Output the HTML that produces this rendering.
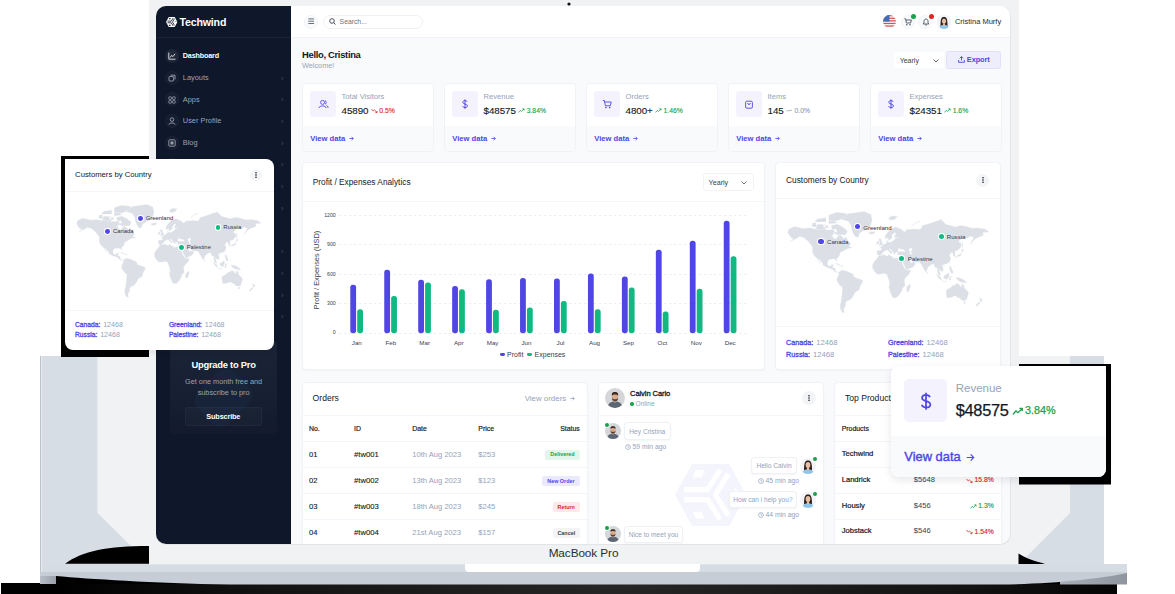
<!DOCTYPE html><html><head><meta charset="utf-8"><style>
*{margin:0;padding:0;box-sizing:border-box}
html,body{width:1175px;height:594px;overflow:hidden;background:#fff}
body{font-family:"Liberation Sans",sans-serif}
#root{position:relative;width:1175px;height:594px;overflow:hidden;background:#fff}
.a{position:absolute}
.t{position:absolute;white-space:nowrap;line-height:1}
svg{position:absolute;overflow:visible}
</style></head><body><div id="root"><svg class="a" style="left:0;top:0" width="1175" height="594" viewBox="0 0 1175 594">
<defs>
<radialGradient id="blk" cx="0.55" cy="0.75" r="0.5" gradientTransform="translate(0.55,0.75) scale(1,20) translate(-0.55,-0.75)"><stop offset="0" stop-color="#262626"/><stop offset="0.6" stop-color="#141414"/><stop offset="1" stop-color="#000"/></radialGradient>
<linearGradient id="cornL" x1="0" y1="0" x2="1" y2="0"><stop offset="0" stop-color="#b9bfc8"/><stop offset="1" stop-color="#9aa0a9"/></linearGradient>
<linearGradient id="cornR" x1="0" y1="0" x2="1" y2="0"><stop offset="0" stop-color="#a9afb8"/><stop offset="1" stop-color="#8f959e"/></linearGradient>
</defs>
<rect x="1" y="583" width="1116" height="11" fill="url(#blk)"/>
<rect x="55" y="574" width="1030" height="10" fill="#000"/>
<rect x="40" y="572" width="16" height="12" fill="url(#cornL)"/>
<rect x="1060" y="572" width="67" height="12.5" fill="url(#cornR)"/>
<path d="M40,572 H1127 V573 C1100,579 1050,584 1000,584.6 H230 C150,583 90,579 56,576 H40 Z" fill="#c6cdd6"/>
<rect x="40" y="564" width="1087" height="8" fill="#d6dce4"/><rect x="149" y="563.3" width="870" height="1" fill="#f8f9fa"/>
<path d="M465,564 H700 V568 Q700,572 696,572 H469 Q465,572 465,568 Z" fill="#ffffff"/>
<rect x="40" y="356" width="109" height="208" fill="#d7dde5"/>
<rect x="40" y="356" width="1" height="216" fill="#bcc3cc"/><rect x="41" y="356" width="1.2" height="216" fill="#e4e9ee"/>
<rect x="1019" y="356" width="85" height="208" fill="#d7dde5"/>
<rect x="149" y="0" width="870" height="564" fill="#f1f2f4"/>
<path d="M97.5,356 H149 V546 H131 L97.5,513 Z" fill="#f1f2f4"/><rect x="97" y="356" width="1" height="157" fill="#e6eaee"/>
<path d="M1019,356 H1070 V513 L1019,564 Z" fill="#f1f2f4"/>
<path d="M65,563.8 C82,551 108,546 149,546 V563.8 Z" fill="#000"/>
<path d="M1018.5,553.5 L1018.5,564 H1045 C1040,562 1030,561 1018.5,553.5 Z" fill="#000"/>
<circle cx="569" cy="4" r="1.6" fill="#111"/>
</svg>
<div class="t" style="left:583.5px;width:0;display:flex;justify-content:center;top:547.8px;font-size:11.80px;color:#2d2d2d;font-weight:400;letter-spacing:-0.1px">MacBook Pro</div>
<div class="a" style="left:155.5px;top:5.5px;width:855.5px;height:539px;border-radius:10.5px;background:#e3e5e9"></div>
<div class="a" style="left:156px;top:6px;width:854px;height:538px;border-radius:10px;overflow:hidden;background:#f8fafc">
<div class="a" style="left:-156px;top:-6px;width:1175px;height:594px">
<div class="a" style="left:156.0px;top:6.0px;width:135.0px;height:538.0px;background:#0f172a"></div>
<div class="a" style="left:156.0px;top:37.0px;width:135.0px;height:1.0px;background:#1a2234"></div>
<svg style="left:165.6px;top:16.9px" width="11.4" height="10.1" viewBox="72 67 525 460" preserveAspectRatio="none"><polygon points="72,295 199,67 474,67 597,295 474,527 199,527" fill="#ffffff"/><g fill="none" stroke="#0f172a" stroke-width="38" stroke-linejoin="miter"><polyline points="140,257 312,257 405,112"/><polyline points="466,140 371,295 466,450"/><polyline points="140,331 312,331 405,478"/></g><g fill="#0f172a"><polygon points="225,111 291,111 269,168 203,168"/><polygon points="203,422 269,422 291,474 225,474"/><polygon points="513,242 562,295 513,298"/></g></svg>
<div class="t" style="left:179.4px;top:17.1px;font-size:10.60px;color:#fff;font-weight:700;letter-spacing:-0.15px">Techwind</div>
<div class="a" style="left:165px;top:48.8px;width:14px;height:14px;border-radius:7px;background:#202839;box-shadow:inset 0 0 0 1px #1b2336"></div>
<div class="t" style="left:182.8px;top:52.1px;font-size:7.20px;color:#ffffff;font-weight:700;letter-spacing:-0.15px">Dashboard</div>
<div class="a" style="left:165px;top:70.7px;width:14px;height:14px;border-radius:7px;background:#151d30;box-shadow:inset 0 0 0 1px #1b2336"></div>
<div class="t" style="left:182.8px;top:73.9px;font-size:7.40px;color:#9ca3af;font-weight:400;">Layouts</div>
<div class="t" style="left:281.0px;top:74.6px;font-size:7.00px;color:#4b5563;font-weight:400;">&#8250;</div>
<div class="a" style="left:165px;top:92.4px;width:14px;height:14px;border-radius:7px;background:#151d30;box-shadow:inset 0 0 0 1px #1b2336"></div>
<div class="t" style="left:182.8px;top:95.6px;font-size:7.40px;color:#9ca3af;font-weight:400;">Apps</div>
<div class="t" style="left:281.0px;top:96.3px;font-size:7.00px;color:#4b5563;font-weight:400;">&#8250;</div>
<div class="a" style="left:165px;top:114.0px;width:14px;height:14px;border-radius:7px;background:#151d30;box-shadow:inset 0 0 0 1px #1b2336"></div>
<div class="t" style="left:182.8px;top:117.2px;font-size:7.40px;color:#9ca3af;font-weight:400;">User Profile</div>
<div class="t" style="left:281.0px;top:117.9px;font-size:7.00px;color:#4b5563;font-weight:400;">&#8250;</div>
<div class="a" style="left:165px;top:135.8px;width:14px;height:14px;border-radius:7px;background:#151d30;box-shadow:inset 0 0 0 1px #1b2336"></div>
<div class="t" style="left:182.8px;top:139.0px;font-size:7.40px;color:#9ca3af;font-weight:400;">Blog</div>
<div class="t" style="left:281.0px;top:139.7px;font-size:7.00px;color:#4b5563;font-weight:400;">&#8250;</div>
<div class="a" style="left:165px;top:157.5px;width:14px;height:14px;border-radius:7px;background:#151d30;box-shadow:inset 0 0 0 1px #1b2336"></div>
<div class="t" style="left:182.8px;top:160.7px;font-size:7.40px;color:#9ca3af;font-weight:400;">Email</div>
<div class="t" style="left:281.0px;top:161.4px;font-size:7.00px;color:#4b5563;font-weight:400;">&#8250;</div>
<div class="a" style="left:165px;top:179.5px;width:14px;height:14px;border-radius:7px;background:#151d30;box-shadow:inset 0 0 0 1px #1b2336"></div>
<div class="t" style="left:182.8px;top:182.7px;font-size:7.40px;color:#9ca3af;font-weight:400;">Chat</div>
<div class="t" style="left:281.0px;top:183.4px;font-size:7.00px;color:#4b5563;font-weight:400;">&#8250;</div>
<div class="a" style="left:165px;top:201.4px;width:14px;height:14px;border-radius:7px;background:#151d30;box-shadow:inset 0 0 0 1px #1b2336"></div>
<div class="t" style="left:182.8px;top:204.6px;font-size:7.40px;color:#9ca3af;font-weight:400;">Calendar</div>
<div class="t" style="left:281.0px;top:205.3px;font-size:7.00px;color:#4b5563;font-weight:400;">&#8250;</div>
<div class="a" style="left:165px;top:223.0px;width:14px;height:14px;border-radius:7px;background:#151d30;box-shadow:inset 0 0 0 1px #1b2336"></div>
<div class="t" style="left:182.8px;top:226.2px;font-size:7.40px;color:#9ca3af;font-weight:400;">Components</div>
<div class="a" style="left:165px;top:244.0px;width:14px;height:14px;border-radius:7px;background:#151d30;box-shadow:inset 0 0 0 1px #1b2336"></div>
<div class="t" style="left:182.8px;top:247.2px;font-size:7.40px;color:#9ca3af;font-weight:400;">Widgets</div>
<div class="t" style="left:281.0px;top:247.9px;font-size:7.00px;color:#4b5563;font-weight:400;">&#8250;</div>
<div class="a" style="left:165px;top:266.0px;width:14px;height:14px;border-radius:7px;background:#151d30;box-shadow:inset 0 0 0 1px #1b2336"></div>
<div class="t" style="left:182.8px;top:269.2px;font-size:7.40px;color:#9ca3af;font-weight:400;">Charts</div>
<div class="t" style="left:281.0px;top:269.9px;font-size:7.00px;color:#4b5563;font-weight:400;">&#8250;</div>
<div class="a" style="left:165px;top:288.0px;width:14px;height:14px;border-radius:7px;background:#151d30;box-shadow:inset 0 0 0 1px #1b2336"></div>
<div class="t" style="left:182.8px;top:291.2px;font-size:7.40px;color:#9ca3af;font-weight:400;">Forms</div>
<div class="t" style="left:281.0px;top:291.9px;font-size:7.00px;color:#4b5563;font-weight:400;">&#8250;</div>
<div class="a" style="left:165px;top:309.5px;width:14px;height:14px;border-radius:7px;background:#151d30;box-shadow:inset 0 0 0 1px #1b2336"></div>
<div class="t" style="left:182.8px;top:312.7px;font-size:7.40px;color:#9ca3af;font-weight:400;">Tables</div>
<div class="t" style="left:281.0px;top:313.4px;font-size:7.00px;color:#4b5563;font-weight:400;">&#8250;</div>
<svg style="left:168px;top:52px" width="8" height="8" viewBox="0 0 8 8"><path d="M0.8 0.5 V7.2 H7.5 M2 5.5 L3.6 3.4 L5 4.6 L7 1.8" fill="none" stroke="#e5e7eb" stroke-width="0.9"/></svg>
<svg style="left:168px;top:74px" width="8" height="8" viewBox="0 0 8 8"><rect x="1" y="2.6" width="4.6" height="4.4" rx="0.6" fill="none" stroke="#9ca3af" stroke-width="0.9"/><path d="M2.5 1.2 H7 V5.5" fill="none" stroke="#9ca3af" stroke-width="0.9"/></svg>
<svg style="left:168px;top:95.5px" width="8" height="8" viewBox="0 0 8 8"><rect x="0.8" y="0.8" width="2.6" height="2.6" rx="0.5" fill="none" stroke="#9ca3af" stroke-width="0.8"/><rect x="4.6" y="0.8" width="2.6" height="2.6" rx="0.5" fill="none" stroke="#9ca3af" stroke-width="0.8"/><rect x="0.8" y="4.6" width="2.6" height="2.6" rx="0.5" fill="none" stroke="#9ca3af" stroke-width="0.8"/><rect x="4.6" y="4.6" width="2.6" height="2.6" rx="0.5" fill="none" stroke="#9ca3af" stroke-width="0.8"/></svg>
<svg style="left:168px;top:117px" width="8" height="8" viewBox="0 0 8 8"><circle cx="4" cy="2.6" r="1.8" fill="none" stroke="#9ca3af" stroke-width="0.9"/><path d="M1 7.6 C1 5.4 7 5.4 7 7.6" fill="none" stroke="#9ca3af" stroke-width="0.9"/></svg>
<svg style="left:168px;top:139px" width="8" height="8" viewBox="0 0 8 8"><rect x="0.8" y="0.8" width="6.4" height="6.4" rx="1" fill="none" stroke="#9ca3af" stroke-width="0.9"/><rect x="2.5" y="2.5" width="3" height="3" fill="#9ca3af"/></svg>
<div class="a" style="left:170px;top:341px;width:106.5px;height:93px;border-radius:4px;background:linear-gradient(180deg,#1a2436,#151f31 70%,#121a2c)"></div>
<div class="a" style="left:201px;top:375px;width:45px;height:45px;border-radius:12px;background:rgba(35,60,105,0.15);transform:rotate(45deg) scaleY(1.15)"></div>
<div class="t" style="left:223.6px;width:0;display:flex;justify-content:center;top:360.3px;font-size:9.40px;color:#fff;font-weight:700;letter-spacing:-0.25px">Upgrade to Pro</div>
<div class="t" style="left:223.6px;width:0;display:flex;justify-content:center;top:378.1px;font-size:7.30px;color:#9ca3af;font-weight:400;">Get one month free and</div>
<div class="t" style="left:223.6px;width:0;display:flex;justify-content:center;top:388.8px;font-size:7.30px;color:#9ca3af;font-weight:400;">subscribe to pro</div>
<div class="a" style="left:184.7px;top:407px;width:77.2px;height:19px;border-radius:3px;background:rgba(255,255,255,0.025);border:1px solid rgba(255,255,255,0.035)"></div>
<div class="t" style="left:223.3px;width:0;display:flex;justify-content:center;top:412.6px;font-size:7.30px;color:#fff;font-weight:700;letter-spacing:-0.15px">Subscribe</div>
<div class="a" style="left:291.0px;top:6.0px;width:719.0px;height:32.0px;background:#fff;border-bottom:1px solid #f0f2f5"></div>
<div class="a" style="left:304px;top:14.6px;width:14px;height:14px;border-radius:7px;background:#f8fafc;border:1px solid #f1f3f6"></div>
<svg style="left:308px;top:18.4px" width="6.4" height="6.4" viewBox="0 0 6.4 6.4"><path d="M0.3 0.9 H6.1 M0.3 3.2 H6.1 M0.3 5.5 H6.1" stroke="#374151" stroke-width="0.75"/></svg>
<div class="a" style="left:323px;top:14.5px;width:100px;height:14px;border-radius:7px;background:#fff;border:1px solid #eef1f5"></div>
<svg style="left:328.5px;top:18px" width="7" height="7" viewBox="0 0 7 7"><circle cx="3" cy="3" r="2.3" fill="none" stroke="#374151" stroke-width="0.9"/><path d="M4.7 4.7 L6.5 6.5" stroke="#374151" stroke-width="0.9"/></svg>
<div class="t" style="left:339.6px;top:18.8px;font-size:6.80px;color:#6b7280;font-weight:400;">Search...</div>
<svg style="left:883px;top:15.2px" width="13" height="13" viewBox="0 0 13 13"><defs><clipPath id="fc"><circle cx="6.5" cy="6.5" r="6.5"/></clipPath></defs><g clip-path="url(#fc)"><rect width="13" height="13" fill="#fff"/><rect y="0" width="13" height="1.3" fill="#d9534f"/><rect y="2.6" width="13" height="1.3" fill="#d9534f"/><rect y="5.2" width="13" height="1.3" fill="#d9534f"/><rect y="7.8" width="13" height="1.3" fill="#d9534f"/><rect y="10.4" width="13" height="1.3" fill="#d9534f"/><rect width="6.5" height="6.5" fill="#3f6fb5"/></g></svg>
<div class="a" style="left:901.0px;top:14.7px;width:14px;height:14px;border-radius:7px;background:#f8fafc;border:1px solid #f1f3f6"></div>
<div class="a" style="left:918.4px;top:14.7px;width:14px;height:14px;border-radius:7px;background:#f8fafc;border:1px solid #f1f3f6"></div>
<svg style="left:904.2px;top:18px" width="8" height="8" viewBox="0 0 8 8"><path d="M0.3 0.8 H1.6 L2.4 5 H6.6 L7.4 2 H2" fill="none" stroke="#374151" stroke-width="0.8" stroke-linejoin="round"/><circle cx="2.8" cy="6.7" r="0.7" fill="#374151"/><circle cx="6" cy="6.7" r="0.7" fill="#374151"/></svg>
<div class="a" style="left:910.6px;top:13.8px;width:5px;height:5px;border-radius:3px;background:#16a34a"></div>
<svg style="left:921.6px;top:17.8px" width="8" height="8" viewBox="0 0 8 8"><path d="M1.2 6 H6.8 L6 5 V3.2 C6 1.8 5.1 1 4 1 C2.9 1 2 1.8 2 3.2 V5 Z M3.2 7 H4.8" fill="none" stroke="#374151" stroke-width="0.8" stroke-linejoin="round"/></svg>
<div class="a" style="left:928.6px;top:13.8px;width:5px;height:5px;border-radius:3px;background:#dc2626"></div>
<div class="a" style="left:937px;top:14.7px;width:14px;height:14px;border-radius:7px;background:#f1f3f6"></div>
<svg style="left:937.0px;top:14.7px" width="14.0" height="14.0" viewBox="0 0 20 20"><defs><clipPath id="cw9384"><circle cx="10" cy="10" r="10"/></clipPath></defs><g clip-path="url(#cw9384)"><rect width="20" height="20" fill="#f1f3f6"/><path d="M5 17 C5 6 6 3 10 3 C14 3 15 6 15 17 Z" fill="#2b1d17"/><ellipse cx="10" cy="8.8" rx="3" ry="3.8" fill="#e8bfa4"/><path d="M3 21 C3 15 6.5 14 10 14 C13.5 14 17 15 17 21 Z" fill="#8ec5ea"/><path d="M8.6 12 H11.4 V15 H8.6 Z" fill="#e8bfa4"/></g></svg>
<div class="t" style="left:954.9px;top:17.9px;font-size:7.50px;color:#1f2937;font-weight:400;">Cristina Murfy</div>
<div class="t" style="left:302.0px;top:50.3px;font-size:9.40px;color:#111827;font-weight:700;letter-spacing:-0.3px">Hello, Cristina</div>
<div class="t" style="left:302.0px;top:62.4px;font-size:7.30px;color:#94a3b8;font-weight:400;">Welcome!</div>
<div class="a" style="left:894.2px;top:51.6px;width:49.7px;height:16.6px;border-radius:3px;background:#fff"></div>
<div class="t" style="left:899.7px;top:56.8px;font-size:7.00px;color:#374151;font-weight:400;">Yearly</div>
<svg style="left:932.5px;top:58.5px" width="6" height="4" viewBox="0 0 6 4"><path d="M0.5 0.5 L3 3 L5.5 0.5" fill="none" stroke="#374151" stroke-width="0.8"/></svg>
<div class="a" style="left:946.2px;top:51px;width:54.9px;height:18px;border-radius:3px;background:#eeedfb;border:1px solid #e3e1f8"></div>
<svg style="left:957.5px;top:56.2px" width="7" height="7" viewBox="0 0 7 7"><path d="M3.5 4.6 V0.7 M1.8 2.3 L3.5 0.6 L5.2 2.3 M0.6 4 V6.3 H6.4 V4" fill="none" stroke="#4f46e5" stroke-width="0.9"/></svg>
<div class="t" style="left:966.8px;top:56.4px;font-size:7.40px;color:#4f46e5;font-weight:700;letter-spacing:-0.1px">Export</div>
<div class="a" style="left:302px;top:82.7px;width:132px;height:69px;border-radius:4px;background:#fff;border:1px solid #f0f2f6;overflow:hidden"><div class="a" style="left:0;top:42.3px;width:132px;height:27px;background:#f8fafc"></div></div>
<div class="a" style="left:310.3px;top:91px;width:25.5px;height:25.5px;border-radius:3px;background:#f3f2fd"></div>
<svg style="left:318.3px;top:98.8px" width="10.0" height="10.0" viewBox="0 0 10 10"><circle cx="4.6" cy="3.4" r="2" fill="none" stroke="#4f46e5" stroke-width="0.9"/><path d="M1 9 C1 6.3 8.2 6.3 8.2 9" fill="none" stroke="#4f46e5" stroke-width="0.9"/><path d="M7 1.6 A1.9 1.9 0 0 1 7 5.2 M8.6 6.3 C9.6 6.8 10 7.7 10 9" fill="none" stroke="#4f46e5" stroke-width="0.9"/></svg>
<div class="t" style="left:341.5px;top:92.8px;font-size:7.60px;color:#94a3b8;font-weight:400;">Total Visitors</div>
<div class="t" style="left:341.5px;top:105.5px;display:flex;align-items:center;font-size:9.8px;color:#111827;letter-spacing:-0.05px;-webkit-text-stroke:0.12px #111827">45890<svg style="position:static;margin:0 2px 0 2.3px" width="6.5" height="5.4" viewBox="0 0 6.5 5.4"><path d="M0.5 1 L2.3 3 L3.5 2 L6 4.4 M4.4 4.6 H6.1 V3" fill="none" stroke="#dc2626" stroke-width="0.8"/></svg><span style="font-size:6.8px;color:#dc2626;letter-spacing:0;position:relative;top:0.8px;-webkit-text-stroke:0.12px #dc2626">0.5%</span></div>
<div class="t" style="left:310.3px;top:135.1px;font-size:7.60px;color:#4f46e5;font-weight:700;">View data</div>
<svg style="left:348.5px;top:135.8px" width="5" height="5" viewBox="0 0 5 5"><path d="M0.4 2.5 H4.3 M2.6 0.8 L4.3 2.5 L2.6 4.2" fill="none" stroke="#4f46e5" stroke-width="0.8"/></svg>
<div class="a" style="left:444px;top:82.7px;width:132px;height:69px;border-radius:4px;background:#fff;border:1px solid #f0f2f6;overflow:hidden"><div class="a" style="left:0;top:42.3px;width:132px;height:27px;background:#f8fafc"></div></div>
<div class="a" style="left:452.3px;top:91px;width:25.5px;height:25.5px;border-radius:3px;background:#f3f2fd"></div>
<svg style="left:460.3px;top:98.8px" width="10.0" height="10.0" viewBox="0 0 10 10"><path d="M7.2 2.8 C6.8 1.9 6 1.6 5 1.6 C3.6 1.6 2.8 2.3 2.8 3.3 C2.8 5.6 7.4 4.5 7.4 6.9 C7.4 7.9 6.4 8.6 5 8.6 C3.8 8.6 3 8.1 2.6 7.2 M5 0.4 V9.8" fill="none" stroke="#4f46e5" stroke-width="0.95"/></svg>
<div class="t" style="left:483.5px;top:92.8px;font-size:7.60px;color:#94a3b8;font-weight:400;">Revenue</div>
<div class="t" style="left:483.5px;top:105.5px;display:flex;align-items:center;font-size:9.8px;color:#111827;letter-spacing:-0.05px;-webkit-text-stroke:0.12px #111827">$48575<svg style="position:static;margin:0 2px 0 2.3px" width="6.5" height="5.4" viewBox="0 0 6.5 5.4"><path d="M0.5 4.4 L2.3 2.4 L3.5 3.4 L6 1 M4.4 0.8 H6.1 V2.4" fill="none" stroke="#16a34a" stroke-width="0.8"/></svg><span style="font-size:6.8px;color:#16a34a;letter-spacing:0;position:relative;top:0.8px;-webkit-text-stroke:0.12px #16a34a">3.84%</span></div>
<div class="t" style="left:452.3px;top:135.1px;font-size:7.60px;color:#4f46e5;font-weight:700;">View data</div>
<svg style="left:490.5px;top:135.8px" width="5" height="5" viewBox="0 0 5 5"><path d="M0.4 2.5 H4.3 M2.6 0.8 L4.3 2.5 L2.6 4.2" fill="none" stroke="#4f46e5" stroke-width="0.8"/></svg>
<div class="a" style="left:586px;top:82.7px;width:132px;height:69px;border-radius:4px;background:#fff;border:1px solid #f0f2f6;overflow:hidden"><div class="a" style="left:0;top:42.3px;width:132px;height:27px;background:#f8fafc"></div></div>
<div class="a" style="left:594.3px;top:91px;width:25.5px;height:25.5px;border-radius:3px;background:#f3f2fd"></div>
<svg style="left:602.3px;top:98.8px" width="10.0" height="10.0" viewBox="0 0 10 10"><path d="M0.8 1.5 H2.3 L3.4 6.8 H8.3 L9.2 3 H2.8" fill="none" stroke="#4f46e5" stroke-width="0.9" stroke-linejoin="round"/><circle cx="3.9" cy="8.6" r="0.8" fill="#4f46e5"/><circle cx="7.7" cy="8.6" r="0.8" fill="#4f46e5"/></svg>
<div class="t" style="left:625.5px;top:92.8px;font-size:7.60px;color:#94a3b8;font-weight:400;">Orders</div>
<div class="t" style="left:625.5px;top:105.5px;display:flex;align-items:center;font-size:9.8px;color:#111827;letter-spacing:-0.05px;-webkit-text-stroke:0.12px #111827">4800+<svg style="position:static;margin:0 2px 0 2.3px" width="6.5" height="5.4" viewBox="0 0 6.5 5.4"><path d="M0.5 4.4 L2.3 2.4 L3.5 3.4 L6 1 M4.4 0.8 H6.1 V2.4" fill="none" stroke="#16a34a" stroke-width="0.8"/></svg><span style="font-size:6.8px;color:#16a34a;letter-spacing:0;position:relative;top:0.8px;-webkit-text-stroke:0.12px #16a34a">1.46%</span></div>
<div class="t" style="left:594.3px;top:135.1px;font-size:7.60px;color:#4f46e5;font-weight:700;">View data</div>
<svg style="left:632.5px;top:135.8px" width="5" height="5" viewBox="0 0 5 5"><path d="M0.4 2.5 H4.3 M2.6 0.8 L4.3 2.5 L2.6 4.2" fill="none" stroke="#4f46e5" stroke-width="0.8"/></svg>
<div class="a" style="left:728px;top:82.7px;width:132px;height:69px;border-radius:4px;background:#fff;border:1px solid #f0f2f6;overflow:hidden"><div class="a" style="left:0;top:42.3px;width:132px;height:27px;background:#f8fafc"></div></div>
<div class="a" style="left:736.3px;top:91px;width:25.5px;height:25.5px;border-radius:3px;background:#f3f2fd"></div>
<svg style="left:744.3px;top:98.8px" width="10.0" height="10.0" viewBox="0 0 10 10"><rect x="1.6" y="2.2" width="6.8" height="7" rx="1.2" fill="none" stroke="#4f46e5" stroke-width="0.9"/><path d="M3.6 4 C3.6 6 6.4 6 6.4 4" fill="none" stroke="#4f46e5" stroke-width="0.9"/></svg>
<div class="t" style="left:767.5px;top:92.8px;font-size:7.60px;color:#94a3b8;font-weight:400;">Items</div>
<div class="t" style="left:767.5px;top:105.5px;display:flex;align-items:center;font-size:9.8px;color:#111827;letter-spacing:-0.05px;-webkit-text-stroke:0.12px #111827">145<svg style="position:static;margin:0 2px 0 2.3px" width="6.5" height="5.4" viewBox="0 0 6.5 5.4"><path d="M0.5 3.4 C2 1.4 3.5 3.8 6 2" fill="none" stroke="#94a3b8" stroke-width="0.8"/></svg><span style="font-size:6.8px;color:#94a3b8;letter-spacing:0;position:relative;top:0.8px;-webkit-text-stroke:0.12px #94a3b8">0.0%</span></div>
<div class="t" style="left:736.3px;top:135.1px;font-size:7.60px;color:#4f46e5;font-weight:700;">View data</div>
<svg style="left:774.5px;top:135.8px" width="5" height="5" viewBox="0 0 5 5"><path d="M0.4 2.5 H4.3 M2.6 0.8 L4.3 2.5 L2.6 4.2" fill="none" stroke="#4f46e5" stroke-width="0.8"/></svg>
<div class="a" style="left:870px;top:82.7px;width:132px;height:69px;border-radius:4px;background:#fff;border:1px solid #f0f2f6;overflow:hidden"><div class="a" style="left:0;top:42.3px;width:132px;height:27px;background:#f8fafc"></div></div>
<div class="a" style="left:878.3px;top:91px;width:25.5px;height:25.5px;border-radius:3px;background:#f3f2fd"></div>
<svg style="left:886.3px;top:98.8px" width="10.0" height="10.0" viewBox="0 0 10 10"><path d="M7.2 2.8 C6.8 1.9 6 1.6 5 1.6 C3.6 1.6 2.8 2.3 2.8 3.3 C2.8 5.6 7.4 4.5 7.4 6.9 C7.4 7.9 6.4 8.6 5 8.6 C3.8 8.6 3 8.1 2.6 7.2 M5 0.4 V9.8" fill="none" stroke="#4f46e5" stroke-width="0.95"/></svg>
<div class="t" style="left:909.5px;top:92.8px;font-size:7.60px;color:#94a3b8;font-weight:400;">Expenses</div>
<div class="t" style="left:909.5px;top:105.5px;display:flex;align-items:center;font-size:9.8px;color:#111827;letter-spacing:-0.05px;-webkit-text-stroke:0.12px #111827">$24351<svg style="position:static;margin:0 2px 0 2.3px" width="6.5" height="5.4" viewBox="0 0 6.5 5.4"><path d="M0.5 4.4 L2.3 2.4 L3.5 3.4 L6 1 M4.4 0.8 H6.1 V2.4" fill="none" stroke="#16a34a" stroke-width="0.8"/></svg><span style="font-size:6.8px;color:#16a34a;letter-spacing:0;position:relative;top:0.8px;-webkit-text-stroke:0.12px #16a34a">1.6%</span></div>
<div class="t" style="left:878.3px;top:135.1px;font-size:7.60px;color:#4f46e5;font-weight:700;">View data</div>
<svg style="left:916.5px;top:135.8px" width="5" height="5" viewBox="0 0 5 5"><path d="M0.4 2.5 H4.3 M2.6 0.8 L4.3 2.5 L2.6 4.2" fill="none" stroke="#4f46e5" stroke-width="0.8"/></svg>
<div class="a" style="left:302.0px;top:162.0px;width:463.0px;height:208.0px;border-radius:4px;background:#fff;border:1px solid #f0f2f6;box-shadow:0 1px 2px rgba(15,23,42,0.03);"></div>
<div class="a" style="left:302.0px;top:200.5px;width:463.0px;height:1.0px;background:#f3f5f8"></div>
<div class="t" style="left:312.8px;top:177.9px;font-size:8.30px;color:#111827;font-weight:400;">Profit / Expenses Analytics</div>
<div class="a" style="left:702.6px;top:173.3px;width:51px;height:17.5px;border-radius:3px;background:#fff;border:1px solid #f1f3f6"></div>
<div class="t" style="left:708.5px;top:178.5px;font-size:7.20px;color:#374151;font-weight:400;">Yearly</div>
<svg style="left:741px;top:180.6px" width="6" height="4" viewBox="0 0 6 4"><path d="M0.5 0.5 L3 3 L5.5 0.5" fill="none" stroke="#4b5563" stroke-width="0.8"/></svg>
<svg style="left:339px;top:214.7px" width="408" height="1" viewBox="0 0 408 1"><line x1="0" y1="0.5" x2="408" y2="0.5" stroke="#eceef2" stroke-width="1" stroke-dasharray="2.5 2.5"/></svg>
<div class="t" style="right:839.3px;top:212.5px;font-size:5.20px;color:#374151;font-weight:400;">1200</div>
<svg style="left:339px;top:244.3px" width="408" height="1" viewBox="0 0 408 1"><line x1="0" y1="0.5" x2="408" y2="0.5" stroke="#eceef2" stroke-width="1" stroke-dasharray="2.5 2.5"/></svg>
<div class="t" style="right:839.3px;top:242.1px;font-size:5.20px;color:#374151;font-weight:400;">900</div>
<svg style="left:339px;top:273.8px" width="408" height="1" viewBox="0 0 408 1"><line x1="0" y1="0.5" x2="408" y2="0.5" stroke="#eceef2" stroke-width="1" stroke-dasharray="2.5 2.5"/></svg>
<div class="t" style="right:839.3px;top:271.6px;font-size:5.20px;color:#374151;font-weight:400;">600</div>
<svg style="left:339px;top:302.7px" width="408" height="1" viewBox="0 0 408 1"><line x1="0" y1="0.5" x2="408" y2="0.5" stroke="#eceef2" stroke-width="1" stroke-dasharray="2.5 2.5"/></svg>
<div class="t" style="right:839.3px;top:300.5px;font-size:5.20px;color:#374151;font-weight:400;">300</div>
<svg style="left:339px;top:332.5px" width="408" height="1" viewBox="0 0 408 1"><line x1="0" y1="0.5" x2="408" y2="0.5" stroke="#eceef2" stroke-width="1" stroke-dasharray="2.5 2.5"/></svg>
<div class="t" style="right:839.3px;top:330.3px;font-size:5.20px;color:#374151;font-weight:400;">0</div>
<div class="t" style="left:317px;top:269.7px;font-size:7.4px;color:#374151;font-weight:400;transform:translate(-50%,-50%) rotate(-90deg);transform-origin:center">Profit / Expenses (USD)</div>
<svg style="left:0;top:0" width="1175" height="594" viewBox="0 0 1175 594"><rect x="350.30" y="284.71" width="5.8" height="48.49" rx="2.6" fill="#4f46e5"/><rect x="357.20" y="309.35" width="5.8" height="23.85" rx="2.6" fill="#10b981"/><rect x="384.25" y="269.69" width="5.8" height="63.51" rx="2.6" fill="#4f46e5"/><rect x="391.15" y="296.09" width="5.8" height="37.11" rx="2.6" fill="#10b981"/><rect x="418.20" y="279.70" width="5.8" height="53.50" rx="2.6" fill="#4f46e5"/><rect x="425.10" y="282.55" width="5.8" height="50.65" rx="2.6" fill="#10b981"/><rect x="452.15" y="286.08" width="5.8" height="47.12" rx="2.6" fill="#4f46e5"/><rect x="459.05" y="289.32" width="5.8" height="43.88" rx="2.6" fill="#10b981"/><rect x="486.10" y="279.31" width="5.8" height="53.89" rx="2.6" fill="#4f46e5"/><rect x="493.00" y="309.74" width="5.8" height="23.46" rx="2.6" fill="#10b981"/><rect x="520.05" y="277.93" width="5.8" height="55.27" rx="2.6" fill="#4f46e5"/><rect x="526.95" y="307.48" width="5.8" height="25.72" rx="2.6" fill="#10b981"/><rect x="554.00" y="278.62" width="5.8" height="54.58" rx="2.6" fill="#4f46e5"/><rect x="560.90" y="301.10" width="5.8" height="32.10" rx="2.6" fill="#10b981"/><rect x="587.95" y="273.42" width="5.8" height="59.78" rx="2.6" fill="#4f46e5"/><rect x="594.85" y="309.35" width="5.8" height="23.85" rx="2.6" fill="#10b981"/><rect x="621.90" y="276.56" width="5.8" height="56.64" rx="2.6" fill="#4f46e5"/><rect x="628.80" y="287.45" width="5.8" height="45.75" rx="2.6" fill="#10b981"/><rect x="655.85" y="249.66" width="5.8" height="83.54" rx="2.6" fill="#4f46e5"/><rect x="662.75" y="311.60" width="5.8" height="21.60" rx="2.6" fill="#10b981"/><rect x="689.80" y="240.73" width="5.8" height="92.47" rx="2.6" fill="#4f46e5"/><rect x="696.70" y="288.83" width="5.8" height="44.37" rx="2.6" fill="#10b981"/><rect x="723.75" y="220.70" width="5.8" height="112.50" rx="2.6" fill="#4f46e5"/><rect x="730.65" y="256.34" width="5.8" height="76.86" rx="2.6" fill="#10b981"/></svg>
<div class="t" style="left:356.8px;width:0;display:flex;justify-content:center;top:339.5px;font-size:6.20px;color:#374151;font-weight:400;">Jan</div>
<div class="t" style="left:390.8px;width:0;display:flex;justify-content:center;top:339.5px;font-size:6.20px;color:#374151;font-weight:400;">Feb</div>
<div class="t" style="left:424.7px;width:0;display:flex;justify-content:center;top:339.5px;font-size:6.20px;color:#374151;font-weight:400;">Mar</div>
<div class="t" style="left:458.7px;width:0;display:flex;justify-content:center;top:339.5px;font-size:6.20px;color:#374151;font-weight:400;">Apr</div>
<div class="t" style="left:492.6px;width:0;display:flex;justify-content:center;top:339.5px;font-size:6.20px;color:#374151;font-weight:400;">May</div>
<div class="t" style="left:526.5px;width:0;display:flex;justify-content:center;top:339.5px;font-size:6.20px;color:#374151;font-weight:400;">Jun</div>
<div class="t" style="left:560.5px;width:0;display:flex;justify-content:center;top:339.5px;font-size:6.20px;color:#374151;font-weight:400;">Jul</div>
<div class="t" style="left:594.5px;width:0;display:flex;justify-content:center;top:339.5px;font-size:6.20px;color:#374151;font-weight:400;">Aug</div>
<div class="t" style="left:628.4px;width:0;display:flex;justify-content:center;top:339.5px;font-size:6.20px;color:#374151;font-weight:400;">Sep</div>
<div class="t" style="left:662.4px;width:0;display:flex;justify-content:center;top:339.5px;font-size:6.20px;color:#374151;font-weight:400;">Oct</div>
<div class="t" style="left:696.3px;width:0;display:flex;justify-content:center;top:339.5px;font-size:6.20px;color:#374151;font-weight:400;">Nov</div>
<div class="t" style="left:730.2px;width:0;display:flex;justify-content:center;top:339.5px;font-size:6.20px;color:#374151;font-weight:400;">Dec</div>
<div class="a" style="left:499.7px;top:353.2px;width:5.3px;height:2.8px;border-radius:1.4px;background:#4f46e5"></div>
<div class="t" style="left:507.0px;top:350.8px;font-size:7.00px;color:#374151;font-weight:400;">Profit</div>
<div class="a" style="left:527px;top:353.2px;width:5.3px;height:2.8px;border-radius:1.4px;background:#10b981"></div>
<div class="t" style="left:534.6px;top:350.8px;font-size:7.00px;color:#374151;font-weight:400;">Expenses</div>
<div class="a" style="left:775.4px;top:162.0px;width:225.6px;height:208.0px;border-radius:4px;background:#fff;border:1px solid #f0f2f6;box-shadow:0 1px 2px rgba(15,23,42,0.03);"></div>
<div class="a" style="left:775.4px;top:197.5px;width:225.6px;height:1.0px;background:#f1f4f8"></div>
<div class="a" style="left:775.4px;top:325.8px;width:225.6px;height:1.0px;background:#f3f5f8"></div>
<div class="t" style="left:786.1px;top:176.0px;font-size:8.30px;color:#111827;font-weight:400;">Customers by Country</div>
<div class="a" style="left:976.3px;top:173.5px;width:13.0px;height:13.0px;border-radius:50%;background:#f3f4f6"></div><svg style="left:981.8px;top:177.0px" width="2" height="6" viewBox="0 0 2 6"><circle cx="1" cy="0.8" r="0.8" fill="#111827"/><circle cx="1" cy="3" r="0.8" fill="#111827"/><circle cx="1" cy="5.2" r="0.8" fill="#111827"/></svg>
<svg style="left:786.0px;top:211.0px" width="204.0" height="102.0" viewBox="0 0 204 102"><path d="M1.7,21.5 L2.9,18.1 L8.5,15.6 L16.9,17.4 L24.2,17.0 L31.5,18.5 L37.2,18.5 L42.8,19.0 L46.7,18.5 L50.1,18.0 L51.2,21.0 L47.8,21.9 L46.2,24.7 L47.8,27.3 L50.1,28.1 L51.8,25.5 L52.9,24.2 L55.1,24.7 L58.0,27.7 L60.2,26.0 L61.9,29.8 L64.7,32.5 L63.0,35.6 L66.4,36.7 L61.9,37.4 L59.1,38.8 L56.8,40.2 L54.6,41.3 L53.5,43.6 L53.5,44.9 L50.7,47.5 L51.2,50.9 L50.1,49.4 L49.0,48.1 L46.2,48.1 L43.3,48.5 L41.7,50.0 L41.4,53.1 L42.8,55.2 L45.0,55.0 L45.6,53.5 L47.3,53.4 L46.7,56.7 L49.0,57.0 L49.5,60.2 L51.5,60.8 L52.6,61.4 L51.2,61.6 L48.1,60.2 L46.7,58.4 L44.5,57.6 L41.7,56.7 L37.2,54.3 L36.6,52.5 L34.9,50.6 L32.9,48.1 L31.8,47.2 L33.2,50.3 L34.3,52.5 L33.2,51.3 L31.5,48.1 L30.4,46.5 L28.2,44.9 L26.5,41.6 L26.5,35.9 L22.5,30.6 L17.5,26.4 L13.5,25.5 L10.7,27.3 L7.4,28.9 L3.4,31.0 L7.4,27.7 L5.1,26.4 L3.4,24.2 L1.7,21.5ZM29.9,18.0 L39.4,19.0 L39.4,13.8 L31.5,13.3ZM25.9,15.4 L30.4,16.0 L29.9,12.1 L26.5,12.1ZM45.6,17.0 L51.2,23.8 L59.6,23.8 L61.3,20.0 L56.8,16.0 L51.2,13.3 L45.6,14.4ZM42.8,9.2 L51.2,9.8 L56.8,7.3 L61.3,2.7 L51.2,1.3 L42.8,4.1ZM42.8,12.7 L51.2,12.1 L48.4,9.8 L42.8,9.8ZM28.7,11.0 L40.0,11.0 L40.0,6.7 L31.5,8.0ZM48.4,22.8 L51.2,23.3 L50.1,21.0 L47.3,21.5ZM55.1,8.0 L62.5,2.7 L78.2,0.5 L84.9,3.4 L86.1,9.2 L83.8,16.5 L78.2,19.0 L73.7,21.9 L72.0,26.4 L69.2,25.5 L67.0,21.9 L65.8,18.5 L65.3,14.9 L62.5,10.4 L55.1,8.0ZM82.7,21.5 L88.3,20.5 L88.9,21.9 L86.1,23.3 L83.3,22.8ZM52.6,61.4 L55.7,59.0 L60.2,59.9 L62.5,61.1 L67.0,63.1 L68.1,66.0 L71.5,67.4 L76.5,68.9 L76.5,71.2 L74.3,74.7 L73.1,78.9 L69.2,81.3 L66.4,86.4 L63.6,89.3 L61.3,89.7 L59.6,91.7 L59.6,94.6 L58.0,97.5 L57.7,99.8 L58.5,101.4 L56.3,101.4 L54.6,98.3 L54.0,94.6 L55.1,90.4 L56.0,83.8 L56.6,76.8 L53.5,74.1 L50.7,69.4 L51.2,66.6 L52.9,63.7 L52.6,61.4ZM91.1,39.5 L91.1,43.6 L92.8,44.3 L95.1,43.8 L96.2,42.6 L97.9,40.2 L99.6,39.5 L101.2,38.8 L102.9,40.2 L105.2,42.9 L106.3,41.6 L103.5,38.8 L103.2,37.8 L104.6,38.1 L107.4,41.6 L108.6,43.6 L109.7,42.9 L109.1,41.6 L110.8,41.3 L112.5,40.9 L110.8,42.9 L113.1,43.9 L116.4,43.9 L115.9,46.2 L115.4,47.5 L114.5,47.5 L115.6,49.4 L118.1,53.7 L120.4,58.4 L121.5,58.6 L125.4,56.7 L127.4,55.8 L129.6,52.8 L128.0,50.3 L125.1,51.9 L124.3,50.3 L123.2,48.1 L124.3,48.1 L127.7,50.0 L130.8,51.3 L133.6,51.1 L134.4,52.2 L135.5,53.7 L137.2,56.7 L139.8,61.4 L141.3,58.1 L141.3,56.8 L145.1,53.7 L147.6,52.8 L148.2,54.3 L149.3,56.7 L151.0,56.4 L151.6,61.4 L152.7,64.0 L154.4,65.2 L154.1,62.8 L152.7,58.1 L154.1,59.0 L155.2,60.8 L157.5,59.3 L156.9,56.7 L156.1,54.3 L157.5,53.4 L159.7,53.0 L162.0,52.2 L163.7,50.3 L164.8,47.8 L163.9,45.6 L163.1,43.6 L164.8,43.3 L164.5,41.3 L166.5,41.6 L167.3,43.3 L167.3,45.3 L169.0,44.9 L169.0,39.9 L172.1,39.2 L175.2,35.6 L175.2,32.2 L172.4,31.0 L175.5,27.3 L181.6,27.1 L184.5,25.0 L187.8,26.4 L183.9,33.7 L186.1,31.4 L187.8,28.9 L191.8,26.4 L197.4,24.2 L196.8,21.5 L203.0,21.0 L199.1,18.0 L191.8,17.0 L186.1,17.3 L180.5,15.4 L174.9,14.4 L169.3,16.0 L159.7,13.3 L155.2,8.6 L149.6,10.4 L141.2,13.3 L136.7,14.4 L134.4,18.5 L128.8,18.0 L120.9,18.5 L118.7,21.0 L114.7,18.0 L109.7,16.0 L104.6,18.0 L99.0,24.7 L99.6,28.1 L102.1,26.8 L102.9,29.8 L106.3,26.4 L105.7,24.7 L108.6,21.5 L110.2,21.9 L108.0,26.0 L112.8,26.4 L109.4,27.0 L108.3,28.9 L104.1,31.4 L101.5,30.6 L101.0,28.8 L100.7,31.8 L98.4,33.3 L97.0,34.1 L95.1,35.9 L93.7,35.6 L95.3,37.4 L95.3,39.2 L91.1,39.5ZM93.1,34.5 L97.0,33.7 L96.2,31.8 L95.1,28.9 L94.5,27.6 L92.8,28.1 L93.4,30.6 L94.5,31.0 L93.4,32.9 L93.1,34.5ZM90.6,33.3 L92.8,32.9 L92.8,30.6 L91.7,30.3 L90.6,31.8ZM86.6,53.7 L86.6,57.6 L89.4,61.6 L91.7,63.4 L95.1,63.1 L98.4,62.3 L101.2,63.7 L101.5,65.4 L102.9,68.9 L103.8,72.9 L102.8,75.9 L104.6,81.9 L106.3,85.7 L107.4,86.9 L110.8,86.4 L113.6,83.5 L114.7,81.3 L116.1,80.1 L115.9,77.7 L119.0,74.7 L118.7,71.8 L118.4,68.9 L119.5,66.8 L123.2,63.1 L124.9,59.3 L120.6,59.3 L118.4,57.0 L117.0,54.3 L115.9,51.6 L114.5,48.1 L112.5,47.5 L110.2,46.9 L107.4,47.5 L107.4,46.5 L102.4,43.6 L101.8,45.6 L97.9,43.7 L95.6,44.6 L92.8,44.4 L90.6,48.1 L88.9,49.7 L86.6,53.7ZM120.9,80.7 L122.6,80.7 L124.6,75.0 L124.0,72.9 L120.9,75.9 L120.6,78.9ZM169.3,47.5 L170.4,45.6 L172.4,45.6 L174.9,44.6 L175.7,41.6 L175.7,37.8 L178.0,39.2 L176.0,40.6 L174.9,42.9 L173.2,43.6 L171.0,44.4 L169.3,45.9ZM176.0,37.4 L176.9,34.8 L176.6,31.4 L176.0,33.7ZM163.7,55.2 L164.8,55.2 L165.9,58.4 L167.0,60.8 L166.7,62.5 L164.8,61.9 L163.7,57.8ZM149.9,62.8 L151.3,63.7 L154.7,66.6 L155.8,69.3 L153.0,67.7 L149.9,62.8ZM155.5,69.9 L160.6,70.5 L160.3,71.0 L155.8,70.3ZM157.5,65.1 L158.6,67.7 L161.4,68.3 L162.8,65.4 L163.1,63.1 L162.0,61.9 L160.8,63.1 L158.6,64.5ZM163.1,69.2 L163.7,65.4 L166.5,65.1 L164.2,66.6 L165.3,68.3 L163.9,69.2ZM169.8,66.7 L173.8,66.8 L178.8,69.4 L180.8,72.1 L176.6,71.2 L175.5,71.2 L173.8,70.6 L171.0,68.3ZM160.3,78.9 L160.0,81.3 L160.8,86.4 L162.5,87.0 L165.9,86.1 L169.3,84.8 L172.1,86.7 L173.8,87.0 L175.2,89.0 L178.3,89.7 L180.5,88.7 L182.5,82.6 L182.2,80.7 L178.3,77.1 L178.0,74.7 L176.3,72.2 L175.7,74.7 L175.2,76.2 L172.6,72.9 L169.8,72.6 L169.0,74.7 L167.0,74.1 L164.8,76.5 L160.3,78.9ZM177.4,90.8 L179.6,91.0 L179.1,92.6 L178.3,92.8ZM193.3,86.6 L196.5,88.8 L195.7,90.0 L194.5,91.3 L194.3,89.7 L193.7,87.7ZM193.3,90.7 L194.2,91.5 L192.3,93.8 L191.2,95.0 L189.8,94.6 L190.6,93.1ZM125.4,16.0 L128.8,12.7 L134.4,9.8 L131.0,11.0 L127.1,13.8ZM102.4,7.3 L106.3,4.7 L111.4,5.4 L108.6,8.6 L104.6,9.2ZM48.4,53.2 L51.2,52.5 L54.5,54.2 L52.6,54.3 L50.1,52.8ZM54.4,54.5 L57.7,55.1 L56.8,55.4 L54.4,55.3ZM141.1,60.5 L142.2,61.6 L141.7,62.5 L141.2,62.2ZM163.8,52.8 L164.7,51.1 L164.2,51.3 L163.7,52.2ZM157.2,54.8 L158.3,54.3 L158.6,55.2 L157.8,55.4ZM37.2,13.8 L42.2,14.9 L42.2,17.0 L37.7,16.5Z" fill="#dce0e6" stroke="#e6e9ed" stroke-width="0.25"/><path d="M122.6,38.5 L124.9,36.7 L126.5,38.1 L124.9,40.9 L126.5,43.3 L123.7,42.9 L124.3,41.3ZM111.9,40.6 L119.5,40.6 L117.6,38.5 L115.0,38.5 L113.1,37.0 L111.9,39.2Z" fill="#fff"/></svg>
<div class="a" style="left:818.4px;top:238.6px;width:5.2px;height:5.2px;border-radius:50%;background:#4f46e5;box-shadow:0 0 0 1px #fff"></div>
<div class="t" style="left:827.0px;top:238.8px;font-size:6.10px;color:#1f2937;font-weight:400;text-shadow:0 0 1px #fff">Canada</div>
<div class="a" style="left:854.8px;top:224.3px;width:5.2px;height:5.2px;border-radius:50%;background:#4f46e5;box-shadow:0 0 0 1px #fff"></div>
<div class="t" style="left:863.2px;top:224.5px;font-size:6.10px;color:#1f2937;font-weight:400;text-shadow:0 0 1px #fff">Greenland</div>
<div class="a" style="left:939.0px;top:233.9px;width:5.2px;height:5.2px;border-radius:50%;background:#10b981;box-shadow:0 0 0 1px #fff"></div>
<div class="t" style="left:946.8px;top:234.1px;font-size:6.10px;color:#1f2937;font-weight:400;text-shadow:0 0 1px #fff">Russia</div>
<div class="a" style="left:898.9px;top:255.6px;width:5.2px;height:5.2px;border-radius:50%;background:#10b981;box-shadow:0 0 0 1px #fff"></div>
<div class="t" style="left:907.7px;top:255.8px;font-size:6.10px;color:#1f2937;font-weight:400;text-shadow:0 0 1px #fff">Palestine</div>
<div class="t" style="left:786.1px;top:339.4px;font-size:7.20px;color:#4f46e5;font-weight:400;-webkit-text-stroke:0.3px #4f46e5">Canada: <span style="color:#94a3b8;font-weight:400;margin-left:1px;font-size:1.06em;-webkit-text-stroke:0">12468</span></div><div class="t" style="left:786.1px;top:350.5px;font-size:7.20px;color:#4f46e5;font-weight:400;-webkit-text-stroke:0.3px #4f46e5">Russia: <span style="color:#94a3b8;font-weight:400;margin-left:1px;font-size:1.06em;-webkit-text-stroke:0">12468</span></div><div class="t" style="left:888.0px;top:339.4px;font-size:7.20px;color:#4f46e5;font-weight:400;-webkit-text-stroke:0.3px #4f46e5">Greenland: <span style="color:#94a3b8;font-weight:400;margin-left:1px;font-size:1.06em;-webkit-text-stroke:0">12468</span></div><div class="t" style="left:888.0px;top:350.5px;font-size:7.20px;color:#4f46e5;font-weight:400;-webkit-text-stroke:0.3px #4f46e5">Palestine: <span style="color:#94a3b8;font-weight:400;margin-left:1px;font-size:1.06em;-webkit-text-stroke:0">12468</span></div>
<div class="a" style="left:302.0px;top:381.5px;width:285.5px;height:178.5px;border-radius:4px;background:#fff;border:1px solid #f0f2f6;box-shadow:0 1px 2px rgba(15,23,42,0.03);"></div>
<div class="a" style="left:302.0px;top:415.0px;width:285.0px;height:1.0px;background:#f1f4f8"></div>
<div class="t" style="left:312.6px;top:394.1px;font-size:8.60px;color:#111827;font-weight:400;">Orders</div>
<div class="t" style="left:524.7px;top:394.5px;font-size:7.90px;color:#94a3b8;font-weight:400;">View orders</div>
<svg style="left:569.5px;top:396px" width="5" height="5" viewBox="0 0 5 5"><path d="M0.4 2.5 H4.3 M2.6 0.8 L4.3 2.5 L2.6 4.2" fill="none" stroke="#94a3b8" stroke-width="0.8"/></svg>
<div class="a" style="left:302.0px;top:441.0px;width:285.0px;height:1.0px;background:#f1f4f8"></div>
<div class="a" style="left:302.0px;top:467.1px;width:285.0px;height:1.0px;background:#f1f4f8"></div>
<div class="a" style="left:302.0px;top:493.1px;width:285.0px;height:1.0px;background:#f1f4f8"></div>
<div class="a" style="left:302.0px;top:519.2px;width:285.0px;height:1.0px;background:#f1f4f8"></div>
<div class="t" style="left:309.0px;top:425.9px;font-size:6.90px;color:#111827;font-weight:400;-webkit-text-stroke:0.18px #111827">No.</div>
<div class="t" style="left:354.1px;top:425.9px;font-size:6.90px;color:#111827;font-weight:400;-webkit-text-stroke:0.18px #111827">ID</div>
<div class="t" style="left:412.3px;top:425.9px;font-size:6.90px;color:#111827;font-weight:400;-webkit-text-stroke:0.18px #111827">Date</div>
<div class="t" style="left:478.3px;top:425.9px;font-size:6.90px;color:#111827;font-weight:400;-webkit-text-stroke:0.18px #111827">Price</div>
<div class="t" style="right:595.2px;top:425.9px;font-size:6.90px;color:#111827;font-weight:400;-webkit-text-stroke:0.18px #111827">Status</div>
<div class="t" style="left:309.0px;top:450.9px;font-size:7.60px;color:#111827;font-weight:400;-webkit-text-stroke:0.1px #111827">01</div>
<div class="t" style="left:354.1px;top:450.9px;font-size:7.70px;color:#111827;font-weight:400;-webkit-text-stroke:0.1px #111827">#tw001</div>
<div class="t" style="left:412.3px;top:450.6px;font-size:7.60px;color:#94a3b8;font-weight:400;">10th Aug 2023</div>
<div class="t" style="left:478.3px;top:450.6px;font-size:7.60px;color:#94a3b8;font-weight:400;">$253</div>
<div class="a" style="left:545.3px;top:449.6px;width:34.5px;height:10px;border-radius:2px;background:#e3f6ec"></div>
<div class="t" style="left:562.5px;width:0;display:flex;justify-content:center;top:452.4px;font-size:5.40px;color:#16a34a;font-weight:700;">Delivered</div>
<div class="t" style="left:309.0px;top:477.0px;font-size:7.60px;color:#111827;font-weight:400;-webkit-text-stroke:0.1px #111827">02</div>
<div class="t" style="left:354.1px;top:477.0px;font-size:7.70px;color:#111827;font-weight:400;-webkit-text-stroke:0.1px #111827">#tw002</div>
<div class="t" style="left:412.3px;top:476.7px;font-size:7.60px;color:#94a3b8;font-weight:400;">13th Aug 2023</div>
<div class="t" style="left:478.3px;top:476.7px;font-size:7.60px;color:#94a3b8;font-weight:400;">$123</div>
<div class="a" style="left:542.0px;top:475.7px;width:37.8px;height:10px;border-radius:2px;background:#ebeafd"></div>
<div class="t" style="left:560.9px;width:0;display:flex;justify-content:center;top:478.5px;font-size:5.40px;color:#4f46e5;font-weight:700;">New Order</div>
<div class="t" style="left:309.0px;top:503.1px;font-size:7.60px;color:#111827;font-weight:400;-webkit-text-stroke:0.1px #111827">03</div>
<div class="t" style="left:354.1px;top:503.1px;font-size:7.70px;color:#111827;font-weight:400;-webkit-text-stroke:0.1px #111827">#tw003</div>
<div class="t" style="left:412.3px;top:502.8px;font-size:7.60px;color:#94a3b8;font-weight:400;">18th Aug 2023</div>
<div class="t" style="left:478.3px;top:502.8px;font-size:7.60px;color:#94a3b8;font-weight:400;">$245</div>
<div class="a" style="left:552.6px;top:501.8px;width:27.2px;height:10px;border-radius:2px;background:#fde9e9"></div>
<div class="t" style="left:566.2px;width:0;display:flex;justify-content:center;top:504.6px;font-size:5.40px;color:#dc2626;font-weight:700;">Return</div>
<div class="t" style="left:309.0px;top:529.2px;font-size:7.60px;color:#111827;font-weight:400;-webkit-text-stroke:0.1px #111827">04</div>
<div class="t" style="left:354.1px;top:529.2px;font-size:7.70px;color:#111827;font-weight:400;-webkit-text-stroke:0.1px #111827">#tw004</div>
<div class="t" style="left:412.3px;top:528.9px;font-size:7.60px;color:#94a3b8;font-weight:400;">21st Aug 2023</div>
<div class="t" style="left:478.3px;top:528.9px;font-size:7.60px;color:#94a3b8;font-weight:400;">$157</div>
<div class="a" style="left:552.9px;top:527.9px;width:26.9px;height:10px;border-radius:2px;background:#f3f4f6"></div>
<div class="t" style="left:566.3px;width:0;display:flex;justify-content:center;top:530.7px;font-size:5.40px;color:#374151;font-weight:700;">Cancel</div>
<div class="a" style="left:597.6px;top:381.5px;width:226.6px;height:178.5px;border-radius:4px;background:#fff;border:1px solid #f0f2f6;box-shadow:0 1px 2px rgba(15,23,42,0.03);"></div>
<div class="a" style="left:597.6px;top:415.0px;width:226.6px;height:1.0px;background:#f3f5f8"></div>
<svg style="left:674.5px;top:464.0px" width="71.0" height="62.0" viewBox="72 67 525 460" preserveAspectRatio="none"><polygon points="72,295 199,67 474,67 597,295 474,527 199,527" fill="#f4f4fc"/><g fill="none" stroke="#ffffff" stroke-width="38" stroke-linejoin="miter"><polyline points="140,257 312,257 405,112"/><polyline points="466,140 371,295 466,450"/><polyline points="140,331 312,331 405,478"/></g><g fill="#ffffff"><polygon points="225,111 291,111 269,168 203,168"/><polygon points="203,422 269,422 291,474 225,474"/><polygon points="513,242 562,295 513,298"/></g></svg>
<svg style="left:604.8px;top:388.2px" width="20.0" height="20.0" viewBox="0 0 20 20"><defs><clipPath id="cm6436"><circle cx="10" cy="10" r="10"/></clipPath></defs><g clip-path="url(#cm6436)"><rect width="20" height="20" fill="#d4d6da"/><path d="M2.5 21 C2.5 15 6 13.5 10 13.5 C14 13.5 17.5 15 17.5 21 Z" fill="#5b6573"/><path d="M9 11.5 H11 V14.5 H9 Z" fill="#c89a7e"/><ellipse cx="10" cy="8.6" rx="3.1" ry="3.7" fill="#d9a98b"/><path d="M6.8 9.5 C7 13 8.5 13.2 10 13.2 C11.5 13.2 13 13 13.2 9.5 C12.5 11 11 11.2 10 11.2 C9 11.2 7.5 11 6.8 9.5 Z" fill="#5a3f30"/><path d="M6.8 7.5 C6.6 4.5 8 4 10 4 C12 4 13.4 4.5 13.2 7.5 C12 6 8 6 6.8 7.5 Z" fill="#3b2a21"/></g></svg>
<div class="t" style="left:630.0px;top:389.6px;font-size:7.60px;color:#111827;font-weight:400;letter-spacing:-0.1px;-webkit-text-stroke:0.3px #111827">Calvin Carlo</div>
<div class="a" style="left:630.2px;top:402.3px;width:3.6px;height:3.6px;border-radius:50%;background:#16a34a"></div>
<div class="t" style="left:635.5px;top:400.8px;font-size:6.60px;color:#94a3b8;font-weight:400;">Online</div>
<div class="a" style="left:801.8px;top:391.0px;width:14.0px;height:14.0px;border-radius:50%;background:#f3f4f6"></div><svg style="left:807.8px;top:395.0px" width="2" height="6" viewBox="0 0 2 6"><circle cx="1" cy="0.8" r="0.8" fill="#111827"/><circle cx="1" cy="3" r="0.8" fill="#111827"/><circle cx="1" cy="5.2" r="0.8" fill="#111827"/></svg>
<svg style="left:604.7px;top:423.2px" width="16.0" height="16.0" viewBox="0 0 20 20"><defs><clipPath id="cm6470"><circle cx="10" cy="10" r="10"/></clipPath></defs><g clip-path="url(#cm6470)"><rect width="20" height="20" fill="#d4d6da"/><path d="M2.5 21 C2.5 15 6 13.5 10 13.5 C14 13.5 17.5 15 17.5 21 Z" fill="#5b6573"/><path d="M9 11.5 H11 V14.5 H9 Z" fill="#c89a7e"/><ellipse cx="10" cy="8.6" rx="3.1" ry="3.7" fill="#d9a98b"/><path d="M6.8 9.5 C7 13 8.5 13.2 10 13.2 C11.5 13.2 13 13 13.2 9.5 C12.5 11 11 11.2 10 11.2 C9 11.2 7.5 11 6.8 9.5 Z" fill="#5a3f30"/><path d="M6.8 7.5 C6.6 4.5 8 4 10 4 C12 4 13.4 4.5 13.2 7.5 C12 6 8 6 6.8 7.5 Z" fill="#3b2a21"/></g></svg>
<div class="a" style="left:604.5px;top:423px;width:4px;height:4px;border-radius:50%;background:#16a34a;box-shadow:0 0 0 0.6px #fff"></div>
<div class="a" style="left:624.0px;top:422.4px;width:46.6px;height:17.6px;border-radius:3px;background:#fff;border:1px solid #eef1f5;box-shadow:0 1px 2px rgba(15,23,42,0.04)"></div><div class="t" style="left:647.3px;width:0;display:flex;justify-content:center;top:428.5px;font-size:6.60px;color:#94a3b8;font-weight:400;">Hey Cristina</div>
<svg style="left:624.6px;top:443.7px" width="6" height="6" viewBox="0 0 6 6"><circle cx="3" cy="3" r="2.4" fill="none" stroke="#94a3b8" stroke-width="0.7"/><path d="M3 1.6 V3 L4 3.6" fill="none" stroke="#94a3b8" stroke-width="0.7"/></svg><div class="t" style="left:632.6px;top:443.9px;font-size:6.80px;color:#94a3b8;font-weight:400;">59 min ago</div>
<svg style="left:800.0px;top:457.5px" width="16.0" height="16.0" viewBox="0 0 20 20"><defs><clipPath id="cw8457"><circle cx="10" cy="10" r="10"/></clipPath></defs><g clip-path="url(#cw8457)"><rect width="20" height="20" fill="#f1f3f6"/><path d="M5 17 C5 6 6 3 10 3 C14 3 15 6 15 17 Z" fill="#2b1d17"/><ellipse cx="10" cy="8.8" rx="3" ry="3.8" fill="#e8bfa4"/><path d="M3 21 C3 15 6.5 14 10 14 C13.5 14 17 15 17 21 Z" fill="#8ec5ea"/><path d="M8.6 12 H11.4 V15 H8.6 Z" fill="#e8bfa4"/></g></svg>
<div class="a" style="left:812.5px;top:457.3px;width:4px;height:4px;border-radius:50%;background:#16a34a;box-shadow:0 0 0 0.6px #fff"></div>
<div class="a" style="left:751.0px;top:457.0px;width:46.0px;height:17.0px;border-radius:3px;background:#fff;border:1px solid #eef1f5;box-shadow:0 1px 2px rgba(15,23,42,0.04)"></div><div class="t" style="left:774.0px;width:0;display:flex;justify-content:center;top:462.8px;font-size:6.60px;color:#94a3b8;font-weight:400;">Hello Calvin</div>
<svg style="left:757.5px;top:478.0px" width="6" height="6" viewBox="0 0 6 6"><circle cx="3" cy="3" r="2.4" fill="none" stroke="#94a3b8" stroke-width="0.7"/><path d="M3 1.6 V3 L4 3.6" fill="none" stroke="#94a3b8" stroke-width="0.7"/></svg><div class="t" style="left:765.5px;top:478.2px;font-size:6.80px;color:#94a3b8;font-weight:400;">45 min ago</div>
<svg style="left:800.0px;top:491.7px" width="16.0" height="16.0" viewBox="0 0 20 20"><defs><clipPath id="cw8491"><circle cx="10" cy="10" r="10"/></clipPath></defs><g clip-path="url(#cw8491)"><rect width="20" height="20" fill="#f1f3f6"/><path d="M5 17 C5 6 6 3 10 3 C14 3 15 6 15 17 Z" fill="#2b1d17"/><ellipse cx="10" cy="8.8" rx="3" ry="3.8" fill="#e8bfa4"/><path d="M3 21 C3 15 6.5 14 10 14 C13.5 14 17 15 17 21 Z" fill="#8ec5ea"/><path d="M8.6 12 H11.4 V15 H8.6 Z" fill="#e8bfa4"/></g></svg>
<div class="a" style="left:812.5px;top:491.5px;width:4px;height:4px;border-radius:50%;background:#16a34a;box-shadow:0 0 0 0.6px #fff"></div>
<div class="a" style="left:728.8px;top:491.0px;width:68.2px;height:17.0px;border-radius:3px;background:#fff;border:1px solid #eef1f5;box-shadow:0 1px 2px rgba(15,23,42,0.04)"></div><div class="t" style="left:762.9px;width:0;display:flex;justify-content:center;top:496.8px;font-size:6.60px;color:#94a3b8;font-weight:400;">How can i help you?</div>
<svg style="left:757.5px;top:512.0px" width="6" height="6" viewBox="0 0 6 6"><circle cx="3" cy="3" r="2.4" fill="none" stroke="#94a3b8" stroke-width="0.7"/><path d="M3 1.6 V3 L4 3.6" fill="none" stroke="#94a3b8" stroke-width="0.7"/></svg><div class="t" style="left:765.5px;top:512.2px;font-size:6.80px;color:#94a3b8;font-weight:400;">44 min ago</div>
<svg style="left:604.7px;top:526.0px" width="16.0" height="16.0" viewBox="0 0 20 20"><defs><clipPath id="cm6573"><circle cx="10" cy="10" r="10"/></clipPath></defs><g clip-path="url(#cm6573)"><rect width="20" height="20" fill="#d4d6da"/><path d="M2.5 21 C2.5 15 6 13.5 10 13.5 C14 13.5 17.5 15 17.5 21 Z" fill="#5b6573"/><path d="M9 11.5 H11 V14.5 H9 Z" fill="#c89a7e"/><ellipse cx="10" cy="8.6" rx="3.1" ry="3.7" fill="#d9a98b"/><path d="M6.8 9.5 C7 13 8.5 13.2 10 13.2 C11.5 13.2 13 13 13.2 9.5 C12.5 11 11 11.2 10 11.2 C9 11.2 7.5 11 6.8 9.5 Z" fill="#5a3f30"/><path d="M6.8 7.5 C6.6 4.5 8 4 10 4 C12 4 13.4 4.5 13.2 7.5 C12 6 8 6 6.8 7.5 Z" fill="#3b2a21"/></g></svg>
<div class="a" style="left:604.5px;top:525.8px;width:4px;height:4px;border-radius:50%;background:#16a34a;box-shadow:0 0 0 0.6px #fff"></div>
<div class="a" style="left:624.0px;top:525.5px;width:59.0px;height:17.5px;border-radius:3px;background:#fff;border:1px solid #eef1f5;box-shadow:0 1px 2px rgba(15,23,42,0.04)"></div><div class="t" style="left:653.5px;width:0;display:flex;justify-content:center;top:531.5px;font-size:6.60px;color:#94a3b8;font-weight:400;">Nice to meet you</div>
<div class="a" style="left:834.0px;top:381.5px;width:167.7px;height:178.5px;border-radius:4px;background:#fff;border:1px solid #f0f2f6;box-shadow:0 1px 2px rgba(15,23,42,0.03);"></div>
<div class="a" style="left:834.0px;top:415.0px;width:167.7px;height:1.0px;background:#f1f4f8"></div>
<div class="t" style="left:845.0px;top:394.1px;font-size:8.60px;color:#111827;font-weight:400;">Top Products</div>
<div class="a" style="left:834.0px;top:441.0px;width:167.7px;height:1.0px;background:#f1f4f8"></div>
<div class="a" style="left:834.0px;top:467.1px;width:167.7px;height:1.0px;background:#f1f4f8"></div>
<div class="a" style="left:834.0px;top:493.1px;width:167.7px;height:1.0px;background:#f1f4f8"></div>
<div class="a" style="left:834.0px;top:519.2px;width:167.7px;height:1.0px;background:#f1f4f8"></div>
<div class="t" style="left:841.7px;top:425.9px;font-size:6.90px;color:#111827;font-weight:400;-webkit-text-stroke:0.18px #111827">Products</div>
<div class="t" style="left:913.8px;top:425.9px;font-size:6.90px;color:#111827;font-weight:400;-webkit-text-stroke:0.18px #111827">Price</div>
<div class="t" style="left:841.7px;top:450.3px;font-size:7.60px;color:#111827;font-weight:400;-webkit-text-stroke:0.2px #111827">Techwind</div>
<div class="t" style="left:913.8px;top:450.3px;font-size:7.60px;color:#374151;font-weight:400;">$2253</div>
<div class="t" style="right:181.2px;top:451.5px;display:flex;align-items:center;font-size:6.8px;color:#16a34a;-webkit-text-stroke:0.15px #16a34a"><svg style="position:static" width="6.5" height="5.4" viewBox="0 0 6.5 5.4"><path d="M0.5 4.4 L2.3 2.4 L3.5 3.4 L6 1 M4.4 0.8 H6.1 V2.4" fill="none" stroke="#16a34a" stroke-width="0.8"/></svg><span style="margin-left:2px">2.5%</span></div>
<div class="t" style="left:841.7px;top:476.0px;font-size:7.60px;color:#111827;font-weight:400;-webkit-text-stroke:0.2px #111827">Landrick</div>
<div class="t" style="left:913.8px;top:476.0px;font-size:7.60px;color:#374151;font-weight:400;">$5648</div>
<div class="t" style="right:181.2px;top:477.2px;display:flex;align-items:center;font-size:6.8px;color:#dc2626;-webkit-text-stroke:0.15px #dc2626"><svg style="position:static" width="6.5" height="5.4" viewBox="0 0 6.5 5.4"><path d="M0.5 1 L2.3 3 L3.5 2 L6 4.4 M4.4 4.6 H6.1 V3" fill="none" stroke="#dc2626" stroke-width="0.8"/></svg><span style="margin-left:2px">15.8%</span></div>
<div class="t" style="left:841.7px;top:501.7px;font-size:7.60px;color:#111827;font-weight:400;-webkit-text-stroke:0.2px #111827">Hously</div>
<div class="t" style="left:913.8px;top:501.7px;font-size:7.60px;color:#374151;font-weight:400;">$456</div>
<div class="t" style="right:181.2px;top:502.9px;display:flex;align-items:center;font-size:6.8px;color:#16a34a;-webkit-text-stroke:0.15px #16a34a"><svg style="position:static" width="6.5" height="5.4" viewBox="0 0 6.5 5.4"><path d="M0.5 4.4 L2.3 2.4 L3.5 3.4 L6 1 M4.4 0.8 H6.1 V2.4" fill="none" stroke="#16a34a" stroke-width="0.8"/></svg><span style="margin-left:2px">1.3%</span></div>
<div class="t" style="left:841.7px;top:527.4px;font-size:7.60px;color:#111827;font-weight:400;-webkit-text-stroke:0.2px #111827">Jobstack</div>
<div class="t" style="left:913.8px;top:527.4px;font-size:7.60px;color:#374151;font-weight:400;">$546</div>
<div class="t" style="right:181.2px;top:528.6px;display:flex;align-items:center;font-size:6.8px;color:#dc2626;-webkit-text-stroke:0.15px #dc2626"><svg style="position:static" width="6.5" height="5.4" viewBox="0 0 6.5 5.4"><path d="M0.5 1 L2.3 3 L3.5 2 L6 4.4 M4.4 4.6 H6.1 V3" fill="none" stroke="#dc2626" stroke-width="0.8"/></svg><span style="margin-left:2px">1.54%</span></div>
</div></div>
<svg style="left:0;top:0" width="1175" height="594" viewBox="0 0 1175 594"><path d="M61,156 H149 V357 H61 Z" fill="#000"/></svg>
<div class="a" style="left:64.6px;top:159.0px;width:8.4px;height:8.0px;background:#fff"></div>
<div class="a" style="left:64.6px;top:159px;width:209.4px;height:191px;border-radius:8px;background:#fff;box-shadow:0 2px 6px rgba(15,23,42,0.08)"></div>
<div class="a" style="left:64.6px;top:191.3px;width:209.4px;height:1.0px;background:#f3f5f8"></div>
<div class="a" style="left:64.6px;top:309.6px;width:209.4px;height:1.0px;background:#f4f6f9"></div>
<div class="t" style="left:75.1px;top:171.2px;font-size:7.70px;color:#111827;font-weight:400;">Customers by Country</div>
<div class="a" style="left:250.3px;top:169.2px;width:12.0px;height:12.0px;border-radius:50%;background:#f3f4f6"></div><svg style="left:255.3px;top:172.2px" width="2" height="6" viewBox="0 0 2 6"><circle cx="1" cy="0.8" r="0.8" fill="#111827"/><circle cx="1" cy="3" r="0.8" fill="#111827"/><circle cx="1" cy="5.2" r="0.8" fill="#111827"/></svg>
<svg style="left:75.2px;top:204.0px" width="187.2" height="93.6" viewBox="0 0 204 102"><path d="M1.7,21.5 L2.9,18.1 L8.5,15.6 L16.9,17.4 L24.2,17.0 L31.5,18.5 L37.2,18.5 L42.8,19.0 L46.7,18.5 L50.1,18.0 L51.2,21.0 L47.8,21.9 L46.2,24.7 L47.8,27.3 L50.1,28.1 L51.8,25.5 L52.9,24.2 L55.1,24.7 L58.0,27.7 L60.2,26.0 L61.9,29.8 L64.7,32.5 L63.0,35.6 L66.4,36.7 L61.9,37.4 L59.1,38.8 L56.8,40.2 L54.6,41.3 L53.5,43.6 L53.5,44.9 L50.7,47.5 L51.2,50.9 L50.1,49.4 L49.0,48.1 L46.2,48.1 L43.3,48.5 L41.7,50.0 L41.4,53.1 L42.8,55.2 L45.0,55.0 L45.6,53.5 L47.3,53.4 L46.7,56.7 L49.0,57.0 L49.5,60.2 L51.5,60.8 L52.6,61.4 L51.2,61.6 L48.1,60.2 L46.7,58.4 L44.5,57.6 L41.7,56.7 L37.2,54.3 L36.6,52.5 L34.9,50.6 L32.9,48.1 L31.8,47.2 L33.2,50.3 L34.3,52.5 L33.2,51.3 L31.5,48.1 L30.4,46.5 L28.2,44.9 L26.5,41.6 L26.5,35.9 L22.5,30.6 L17.5,26.4 L13.5,25.5 L10.7,27.3 L7.4,28.9 L3.4,31.0 L7.4,27.7 L5.1,26.4 L3.4,24.2 L1.7,21.5ZM29.9,18.0 L39.4,19.0 L39.4,13.8 L31.5,13.3ZM25.9,15.4 L30.4,16.0 L29.9,12.1 L26.5,12.1ZM45.6,17.0 L51.2,23.8 L59.6,23.8 L61.3,20.0 L56.8,16.0 L51.2,13.3 L45.6,14.4ZM42.8,9.2 L51.2,9.8 L56.8,7.3 L61.3,2.7 L51.2,1.3 L42.8,4.1ZM42.8,12.7 L51.2,12.1 L48.4,9.8 L42.8,9.8ZM28.7,11.0 L40.0,11.0 L40.0,6.7 L31.5,8.0ZM48.4,22.8 L51.2,23.3 L50.1,21.0 L47.3,21.5ZM55.1,8.0 L62.5,2.7 L78.2,0.5 L84.9,3.4 L86.1,9.2 L83.8,16.5 L78.2,19.0 L73.7,21.9 L72.0,26.4 L69.2,25.5 L67.0,21.9 L65.8,18.5 L65.3,14.9 L62.5,10.4 L55.1,8.0ZM82.7,21.5 L88.3,20.5 L88.9,21.9 L86.1,23.3 L83.3,22.8ZM52.6,61.4 L55.7,59.0 L60.2,59.9 L62.5,61.1 L67.0,63.1 L68.1,66.0 L71.5,67.4 L76.5,68.9 L76.5,71.2 L74.3,74.7 L73.1,78.9 L69.2,81.3 L66.4,86.4 L63.6,89.3 L61.3,89.7 L59.6,91.7 L59.6,94.6 L58.0,97.5 L57.7,99.8 L58.5,101.4 L56.3,101.4 L54.6,98.3 L54.0,94.6 L55.1,90.4 L56.0,83.8 L56.6,76.8 L53.5,74.1 L50.7,69.4 L51.2,66.6 L52.9,63.7 L52.6,61.4ZM91.1,39.5 L91.1,43.6 L92.8,44.3 L95.1,43.8 L96.2,42.6 L97.9,40.2 L99.6,39.5 L101.2,38.8 L102.9,40.2 L105.2,42.9 L106.3,41.6 L103.5,38.8 L103.2,37.8 L104.6,38.1 L107.4,41.6 L108.6,43.6 L109.7,42.9 L109.1,41.6 L110.8,41.3 L112.5,40.9 L110.8,42.9 L113.1,43.9 L116.4,43.9 L115.9,46.2 L115.4,47.5 L114.5,47.5 L115.6,49.4 L118.1,53.7 L120.4,58.4 L121.5,58.6 L125.4,56.7 L127.4,55.8 L129.6,52.8 L128.0,50.3 L125.1,51.9 L124.3,50.3 L123.2,48.1 L124.3,48.1 L127.7,50.0 L130.8,51.3 L133.6,51.1 L134.4,52.2 L135.5,53.7 L137.2,56.7 L139.8,61.4 L141.3,58.1 L141.3,56.8 L145.1,53.7 L147.6,52.8 L148.2,54.3 L149.3,56.7 L151.0,56.4 L151.6,61.4 L152.7,64.0 L154.4,65.2 L154.1,62.8 L152.7,58.1 L154.1,59.0 L155.2,60.8 L157.5,59.3 L156.9,56.7 L156.1,54.3 L157.5,53.4 L159.7,53.0 L162.0,52.2 L163.7,50.3 L164.8,47.8 L163.9,45.6 L163.1,43.6 L164.8,43.3 L164.5,41.3 L166.5,41.6 L167.3,43.3 L167.3,45.3 L169.0,44.9 L169.0,39.9 L172.1,39.2 L175.2,35.6 L175.2,32.2 L172.4,31.0 L175.5,27.3 L181.6,27.1 L184.5,25.0 L187.8,26.4 L183.9,33.7 L186.1,31.4 L187.8,28.9 L191.8,26.4 L197.4,24.2 L196.8,21.5 L203.0,21.0 L199.1,18.0 L191.8,17.0 L186.1,17.3 L180.5,15.4 L174.9,14.4 L169.3,16.0 L159.7,13.3 L155.2,8.6 L149.6,10.4 L141.2,13.3 L136.7,14.4 L134.4,18.5 L128.8,18.0 L120.9,18.5 L118.7,21.0 L114.7,18.0 L109.7,16.0 L104.6,18.0 L99.0,24.7 L99.6,28.1 L102.1,26.8 L102.9,29.8 L106.3,26.4 L105.7,24.7 L108.6,21.5 L110.2,21.9 L108.0,26.0 L112.8,26.4 L109.4,27.0 L108.3,28.9 L104.1,31.4 L101.5,30.6 L101.0,28.8 L100.7,31.8 L98.4,33.3 L97.0,34.1 L95.1,35.9 L93.7,35.6 L95.3,37.4 L95.3,39.2 L91.1,39.5ZM93.1,34.5 L97.0,33.7 L96.2,31.8 L95.1,28.9 L94.5,27.6 L92.8,28.1 L93.4,30.6 L94.5,31.0 L93.4,32.9 L93.1,34.5ZM90.6,33.3 L92.8,32.9 L92.8,30.6 L91.7,30.3 L90.6,31.8ZM86.6,53.7 L86.6,57.6 L89.4,61.6 L91.7,63.4 L95.1,63.1 L98.4,62.3 L101.2,63.7 L101.5,65.4 L102.9,68.9 L103.8,72.9 L102.8,75.9 L104.6,81.9 L106.3,85.7 L107.4,86.9 L110.8,86.4 L113.6,83.5 L114.7,81.3 L116.1,80.1 L115.9,77.7 L119.0,74.7 L118.7,71.8 L118.4,68.9 L119.5,66.8 L123.2,63.1 L124.9,59.3 L120.6,59.3 L118.4,57.0 L117.0,54.3 L115.9,51.6 L114.5,48.1 L112.5,47.5 L110.2,46.9 L107.4,47.5 L107.4,46.5 L102.4,43.6 L101.8,45.6 L97.9,43.7 L95.6,44.6 L92.8,44.4 L90.6,48.1 L88.9,49.7 L86.6,53.7ZM120.9,80.7 L122.6,80.7 L124.6,75.0 L124.0,72.9 L120.9,75.9 L120.6,78.9ZM169.3,47.5 L170.4,45.6 L172.4,45.6 L174.9,44.6 L175.7,41.6 L175.7,37.8 L178.0,39.2 L176.0,40.6 L174.9,42.9 L173.2,43.6 L171.0,44.4 L169.3,45.9ZM176.0,37.4 L176.9,34.8 L176.6,31.4 L176.0,33.7ZM163.7,55.2 L164.8,55.2 L165.9,58.4 L167.0,60.8 L166.7,62.5 L164.8,61.9 L163.7,57.8ZM149.9,62.8 L151.3,63.7 L154.7,66.6 L155.8,69.3 L153.0,67.7 L149.9,62.8ZM155.5,69.9 L160.6,70.5 L160.3,71.0 L155.8,70.3ZM157.5,65.1 L158.6,67.7 L161.4,68.3 L162.8,65.4 L163.1,63.1 L162.0,61.9 L160.8,63.1 L158.6,64.5ZM163.1,69.2 L163.7,65.4 L166.5,65.1 L164.2,66.6 L165.3,68.3 L163.9,69.2ZM169.8,66.7 L173.8,66.8 L178.8,69.4 L180.8,72.1 L176.6,71.2 L175.5,71.2 L173.8,70.6 L171.0,68.3ZM160.3,78.9 L160.0,81.3 L160.8,86.4 L162.5,87.0 L165.9,86.1 L169.3,84.8 L172.1,86.7 L173.8,87.0 L175.2,89.0 L178.3,89.7 L180.5,88.7 L182.5,82.6 L182.2,80.7 L178.3,77.1 L178.0,74.7 L176.3,72.2 L175.7,74.7 L175.2,76.2 L172.6,72.9 L169.8,72.6 L169.0,74.7 L167.0,74.1 L164.8,76.5 L160.3,78.9ZM177.4,90.8 L179.6,91.0 L179.1,92.6 L178.3,92.8ZM193.3,86.6 L196.5,88.8 L195.7,90.0 L194.5,91.3 L194.3,89.7 L193.7,87.7ZM193.3,90.7 L194.2,91.5 L192.3,93.8 L191.2,95.0 L189.8,94.6 L190.6,93.1ZM125.4,16.0 L128.8,12.7 L134.4,9.8 L131.0,11.0 L127.1,13.8ZM102.4,7.3 L106.3,4.7 L111.4,5.4 L108.6,8.6 L104.6,9.2ZM48.4,53.2 L51.2,52.5 L54.5,54.2 L52.6,54.3 L50.1,52.8ZM54.4,54.5 L57.7,55.1 L56.8,55.4 L54.4,55.3ZM141.1,60.5 L142.2,61.6 L141.7,62.5 L141.2,62.2ZM163.8,52.8 L164.7,51.1 L164.2,51.3 L163.7,52.2ZM157.2,54.8 L158.3,54.3 L158.6,55.2 L157.8,55.4ZM37.2,13.8 L42.2,14.9 L42.2,17.0 L37.7,16.5Z" fill="#dce0e6" stroke="#e6e9ed" stroke-width="0.25"/><path d="M122.6,38.5 L124.9,36.7 L126.5,38.1 L124.9,40.9 L126.5,43.3 L123.7,42.9 L124.3,41.3ZM111.9,40.6 L119.5,40.6 L117.6,38.5 L115.0,38.5 L113.1,37.0 L111.9,39.2Z" fill="#fff"/></svg>
<div class="a" style="left:105.2px;top:229.2px;width:4.8px;height:4.8px;border-radius:50%;background:#4f46e5;box-shadow:0 0 0 1px #fff"></div>
<div class="t" style="left:112.9px;top:229.3px;font-size:5.90px;color:#1f2937;font-weight:400;text-shadow:0 0 1px #fff">Canada</div>
<div class="a" style="left:138.0px;top:216.1px;width:4.8px;height:4.8px;border-radius:50%;background:#4f46e5;box-shadow:0 0 0 1px #fff"></div>
<div class="t" style="left:145.7px;top:216.2px;font-size:5.90px;color:#1f2937;font-weight:400;text-shadow:0 0 1px #fff">Greenland</div>
<div class="a" style="left:215.5px;top:225.0px;width:4.8px;height:4.8px;border-radius:50%;background:#10b981;box-shadow:0 0 0 1px #fff"></div>
<div class="t" style="left:223.2px;top:225.1px;font-size:5.90px;color:#1f2937;font-weight:400;text-shadow:0 0 1px #fff">Russia</div>
<div class="a" style="left:179.0px;top:244.8px;width:4.8px;height:4.8px;border-radius:50%;background:#10b981;box-shadow:0 0 0 1px #fff"></div>
<div class="t" style="left:186.7px;top:244.9px;font-size:5.90px;color:#1f2937;font-weight:400;text-shadow:0 0 1px #fff">Palestine</div>
<div class="t" style="left:75.0px;top:322.2px;font-size:6.70px;color:#4f46e5;font-weight:400;-webkit-text-stroke:0.3px #4f46e5">Canada: <span style="color:#94a3b8;font-weight:400;margin-left:1px;font-size:1.06em;-webkit-text-stroke:0">12468</span></div><div class="t" style="left:75.0px;top:332.4px;font-size:6.70px;color:#4f46e5;font-weight:400;-webkit-text-stroke:0.3px #4f46e5">Russia: <span style="color:#94a3b8;font-weight:400;margin-left:1px;font-size:1.06em;-webkit-text-stroke:0">12468</span></div><div class="t" style="left:168.9px;top:322.2px;font-size:6.70px;color:#4f46e5;font-weight:400;-webkit-text-stroke:0.3px #4f46e5">Greenland: <span style="color:#94a3b8;font-weight:400;margin-left:1px;font-size:1.06em;-webkit-text-stroke:0">12468</span></div><div class="t" style="left:168.9px;top:332.4px;font-size:6.70px;color:#4f46e5;font-weight:400;-webkit-text-stroke:0.3px #4f46e5">Palestine: <span style="color:#94a3b8;font-weight:400;margin-left:1px;font-size:1.06em;-webkit-text-stroke:0">12468</span></div>
<svg style="left:0;top:0" width="1175" height="594" viewBox="0 0 1175 594"><path d="M1019,364 H1111 V484.5 H1019 Z" fill="#000"/></svg>
<div class="a" style="left:1097.0px;top:366.4px;width:8.7px;height:8.6px;background:#fff"></div>
<div class="a" style="left:891.4px;top:366.4px;width:214.3px;height:110.2px;border-radius:8px;background:#fff;overflow:hidden;box-shadow:0 3px 8px rgba(15,23,42,0.10)"><div class="a" style="left:0;top:70px;width:214.3px;height:40.2px;background:#f8fafc"></div></div>
<div class="a" style="left:904.3px;top:379.3px;width:42.3px;height:42.3px;border-radius:5px;background:#f3f2fd"></div>
<svg style="left:916.5px;top:391.5px" width="18.0" height="18.0" viewBox="0 0 10 10"><path d="M7.2 2.8 C6.8 1.9 6 1.6 5 1.6 C3.6 1.6 2.8 2.3 2.8 3.3 C2.8 5.6 7.4 4.5 7.4 6.9 C7.4 7.9 6.4 8.6 5 8.6 C3.8 8.6 3 8.1 2.6 7.2 M5 0.4 V9.8" fill="none" stroke="#4f46e5" stroke-width="0.95"/></svg>
<div class="t" style="left:955.7px;top:382.8px;font-size:11.50px;color:#94a3b8;font-weight:400;">Revenue</div>
<div class="t" style="left:955.7px;top:402.3px;font-size:16.40px;color:#111827;font-weight:400;letter-spacing:-0.3px;-webkit-text-stroke:0.25px #111827">$48575</div>
<svg style="left:1011.5px;top:406.5px" width="11" height="9" viewBox="0 0 6.5 5.4"><path d="M0.5 4.4 L2.3 2.4 L3.5 3.4 L6 1 M4.4 0.8 H6.1 V2.4" fill="none" stroke="#16a34a" stroke-width="0.8"/></svg>
<div class="t" style="left:1025.0px;top:405.2px;font-size:10.80px;color:#16a34a;font-weight:400;-webkit-text-stroke:0.25px #16a34a">3.84%</div>
<div class="t" style="left:904.3px;top:451.1px;font-size:12.90px;color:#4f46e5;font-weight:400;-webkit-text-stroke:0.4px #4f46e5">View data</div>
<svg style="left:966px;top:453px" width="9" height="9" viewBox="0 0 5 5"><path d="M0.4 2.5 H4.3 M2.6 0.8 L4.3 2.5 L2.6 4.2" fill="none" stroke="#4f46e5" stroke-width="0.6"/></svg></div></body></html>
